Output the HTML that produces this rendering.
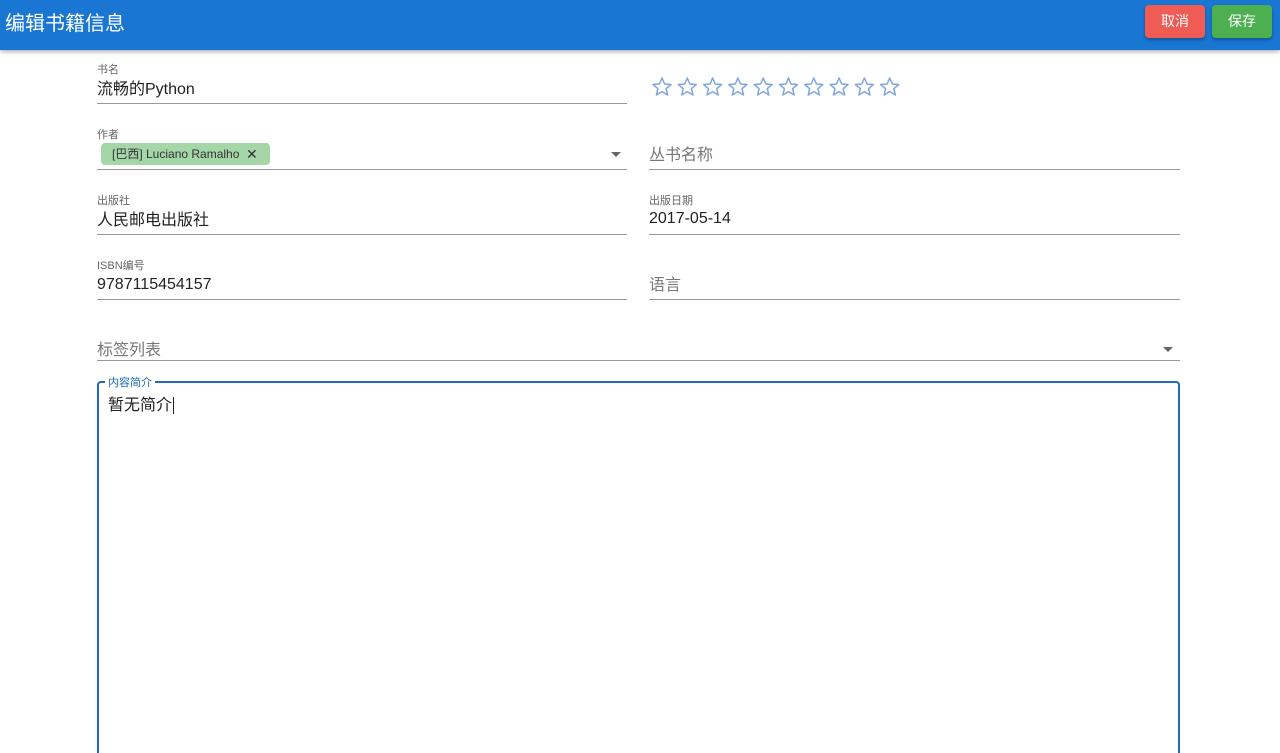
<!DOCTYPE html>
<html><head><meta charset="utf-8"><style>
*{box-sizing:border-box;margin:0;padding:0}
html,body{width:1280px;height:753px;overflow:hidden}
body{background:#fff;font-family:"Liberation Sans","Noto Sans CJK SC",sans-serif;position:relative;color:#222}
.hdr{position:absolute;left:0;top:0;width:1280px;height:50px;background:#1976d2;box-shadow:0 2px 4px rgba(0,0,0,.3)}
.hdr .t{position:absolute;left:5px;top:7px;color:#fff;font-size:20px}
.btn{position:absolute;top:5px;height:33px;width:60px;border-radius:4px;color:#fff;font-size:14px;text-align:center;line-height:33px;box-shadow:0 2px 3px rgba(0,0,0,.3)}
.ab{position:absolute}
.lbl{font-size:11px;color:#666}
.val{font-size:16px;color:#222}
.ph{font-size:16px;color:#777}
.line{position:absolute;height:1px;background:#999}
</style></head><body>
<div class="hdr"><div class="t">编辑书籍信息</div>
<div class="btn" style="left:1145px;background:#ef5b55">取消</div>
<div class="btn" style="left:1212px;background:#4caf50">保存</div></div>

<div class="ab lbl" style="left:97px;top:61px">书名</div>
<div class="ab val" style="left:97px;top:75px">流畅的Python</div>
<div class="line" style="left:97px;top:103px;width:530px"></div>

<svg class="ab" style="left:651px;top:76px" width="255" height="22" viewBox="0 0 255 22">
<g fill="none" stroke="#7fa6e0" stroke-width="1.5" stroke-linejoin="round">
<path id="s" d="M11 2l2.6 6 6.4.5-4.9 4.2 1.5 6.3L11 15.6 5.4 19l1.5-6.3L2 8.5l6.4-.5z"/>
<use href="#s" x="25.3"/><use href="#s" x="50.6"/><use href="#s" x="75.9"/><use href="#s" x="101.2"/><use href="#s" x="126.5"/><use href="#s" x="151.8"/><use href="#s" x="177.1"/><use href="#s" x="202.4"/><use href="#s" x="227.7"/>
</g></svg>

<div class="ab lbl" style="left:97px;top:126px">作者</div>
<div class="ab" style="left:101px;top:143px;height:22px;width:169px;background:#a5d6a7;border-radius:4px;font-size:12px;line-height:22px;padding-left:11px;color:#333">[巴西] Luciano Ramalho <span style="position:absolute;left:145px;font-size:14px">✕</span></div>
<div class="ab" style="left:611px;top:152px;width:0;height:0;border-left:5px solid transparent;border-right:5px solid transparent;border-top:5px solid #666"></div>
<div class="line" style="left:97px;top:169px;width:530px"></div>
<div class="ab ph" style="left:649px;top:141px">丛书名称</div>
<div class="line" style="left:649px;top:169px;width:531px"></div>

<div class="ab lbl" style="left:97px;top:192px">出版社</div>
<div class="ab val" style="left:97px;top:206px">人民邮电出版社</div>
<div class="line" style="left:97px;top:234px;width:530px"></div>
<div class="ab lbl" style="left:649px;top:192px">出版日期</div>
<div class="ab val" style="left:649px;top:210px">2017-05-14</div>
<div class="line" style="left:649px;top:234px;width:531px"></div>

<div class="ab lbl" style="left:97px;top:257px">ISBN编号</div>
<div class="ab val" style="left:97px;top:276px">9787115454157</div>
<div class="line" style="left:97px;top:299px;width:530px"></div>
<div class="ab ph" style="left:649px;top:271px">语言</div>
<div class="line" style="left:649px;top:299px;width:531px"></div>

<div class="ab ph" style="left:97px;top:336px">标签列表</div>
<div class="ab" style="left:1163px;top:347px;width:0;height:0;border-left:5px solid transparent;border-right:5px solid transparent;border-top:5px solid #666"></div>
<div class="line" style="left:97px;top:360px;width:1083px"></div>

<div class="ab" style="left:97px;top:381px;width:1083px;height:400px;border:2px solid #1e6bb8;border-radius:4px"></div>
<div class="ab" style="left:105px;top:374px;background:#fff;padding:0 3px;font-size:11px;color:#1e6bb8">内容简介</div>
<div class="ab val" style="left:108px;top:391px">暂无简介<span style="border-left:1px solid #222;margin-left:1px"></span></div>
</body></html>
